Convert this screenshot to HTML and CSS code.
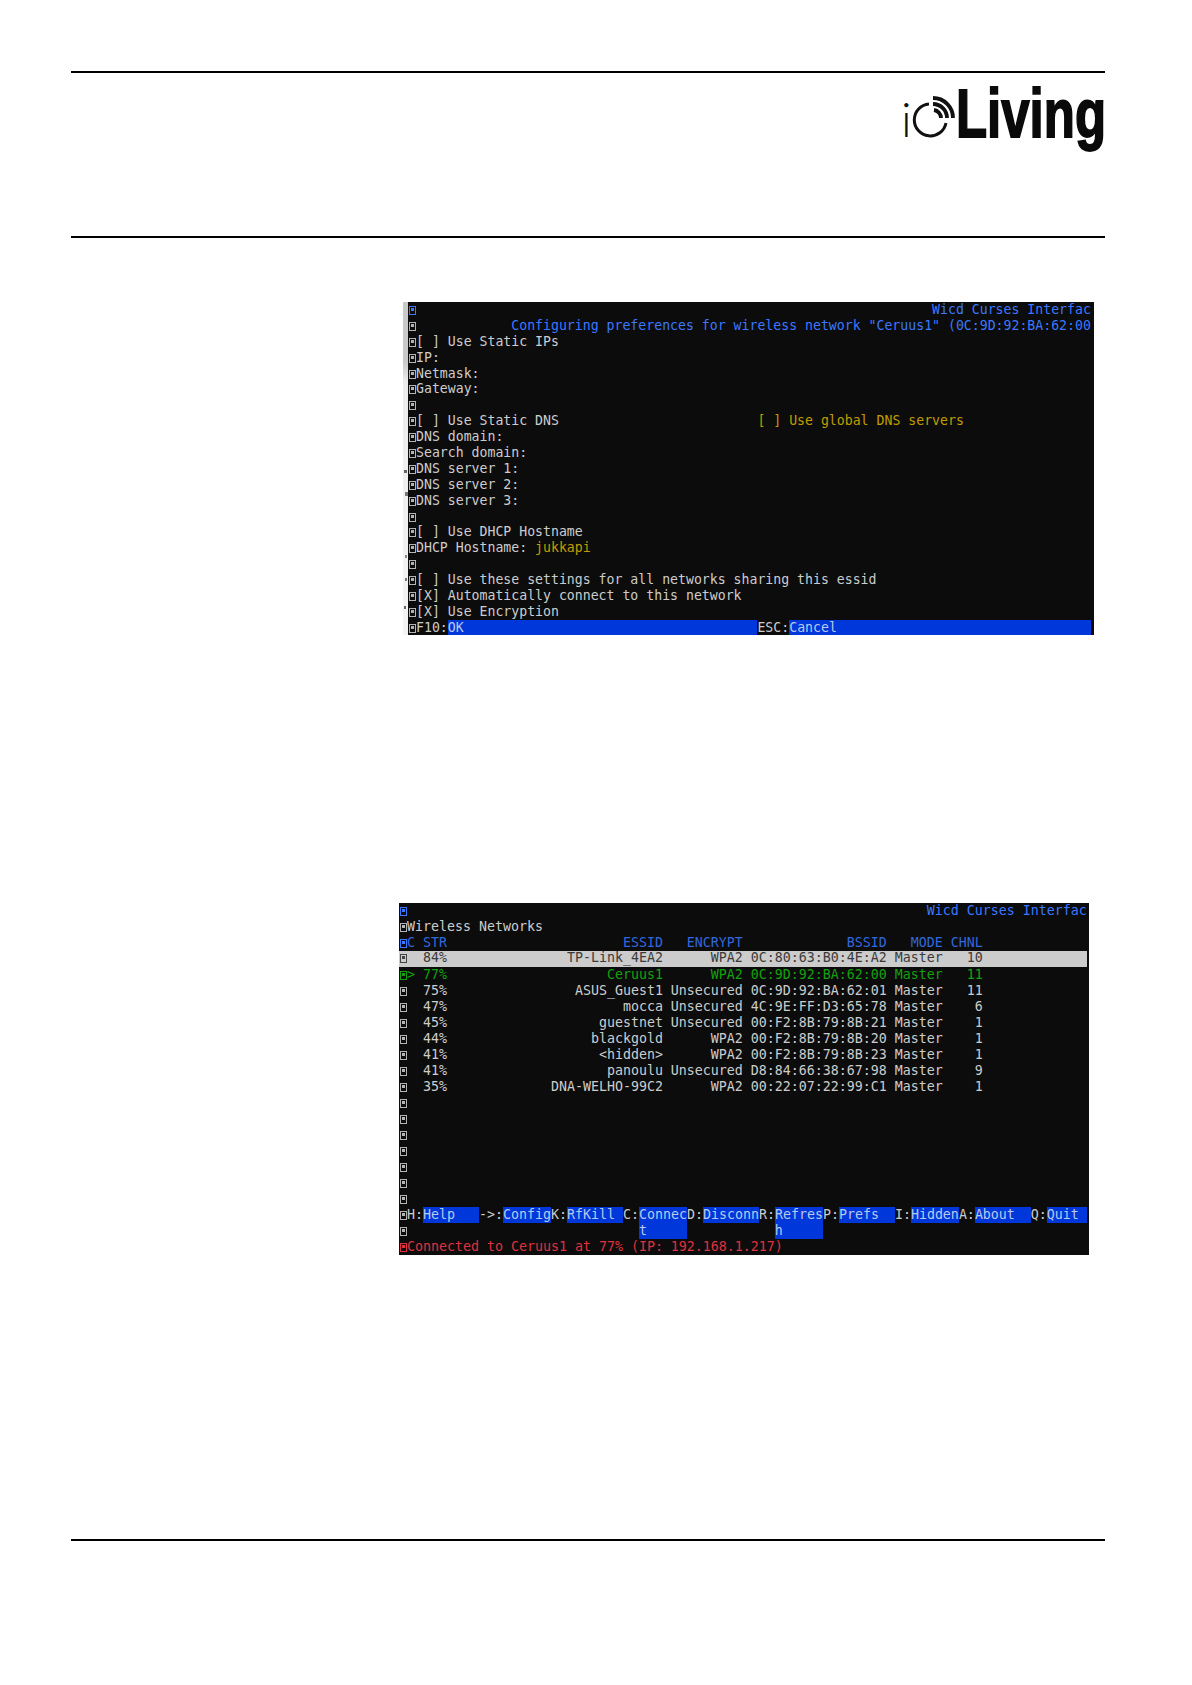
FILE: index.html
```html
<!DOCTYPE html>
<html lang="en">
<head>
<meta charset="utf-8">
<title>ioLiving - Wicd Curses Interface</title>
<link rel="stylesheet" href="styles.css">
</head>
<body>
<div class="page">
  <header class="head">
    <svg class="logo" viewBox="0 0 204 68" width="204" height="68" aria-label="ioLiving">
      <text class="logo-i" x="0" y="49">i</text>
      <path class="logo-ring" d="M28 16 A16 16 0 1 0 45 35"/>
      <path class="logo-wave" d="M32 10 A20 20 0 0 1 52 30"/>
      <path class="logo-wave" d="M32 16 A14 14 0 0 1 46 30"/>
      <path class="logo-wave" d="M33 22 A8 8 0 0 1 40 30"/>
      <text class="logo-word" x="55" y="48.5" textLength="150" lengthAdjust="spacingAndGlyphs">Living</text>
    </svg>
  </header>

  <main class="content">
    <section class="shot-a">
      <div class="strip"></div>
      <div class="term term-a">
        <div class="row"><i class="g gb"></i><span class="bl">                                                                 Wicd Curses Interfac</span></div>
        <div class="row"><i class="g"></i><span class="bl">            Configuring preferences for wireless network "Ceruus1" (0C:9D:92:BA:62:00</span></div>
        <div class="row"><i class="g"></i>[ ] Use Static IPs</div>
        <div class="row"><i class="g"></i>IP:</div>
        <div class="row"><i class="g"></i>Netmask:</div>
        <div class="row"><i class="g"></i>Gateway:</div>
        <div class="row"><i class="g"></i></div>
        <div class="row"><i class="g"></i>[ ] Use Static DNS                         <span class="ye">[ ] Use global DNS servers</span></div>
        <div class="row"><i class="g"></i>DNS domain:</div>
        <div class="row"><i class="g"></i>Search domain:</div>
        <div class="row"><i class="g"></i>DNS server 1:</div>
        <div class="row"><i class="g"></i>DNS server 2:</div>
        <div class="row"><i class="g"></i>DNS server 3:</div>
        <div class="row"><i class="g"></i></div>
        <div class="row"><i class="g"></i>[ ] Use DHCP Hostname</div>
        <div class="row"><i class="g"></i>DHCP Hostname: <span class="ye">jukkapi</span></div>
        <div class="row"><i class="g"></i></div>
        <div class="row"><i class="g"></i>[ ] Use these settings for all networks sharing this essid</div>
        <div class="row"><i class="g"></i>[X] Automatically connect to this network</div>
        <div class="row"><i class="g"></i>[X] Use Encryption</div>
        <div class="row"><i class="g"></i>F10:<span class="key">OK                                     </span>ESC:<span class="key">Cancel                                </span></div>
      </div>
    </section>

    <section class="term term-b">
      <div class="row"><i class="g gb"></i><span class="bl">                                                                 Wicd Curses Interfac</span></div>
      <div class="row"><i class="g"></i>Wireless Networks</div>
      <div class="row"><i class="g gb"></i><span class="hd">C STR                      ESSID   ENCRYPT             BSSID   MODE CHNL</span></div>
      <div class="row sel"><i class="g"></i>  84%               TP-Link_4EA2      WPA2 0C:80:63:B0:4E:A2 Master   10</div>
      <div class="row gr"><i class="g"></i>&gt; 77%                    Ceruus1      WPA2 0C:9D:92:BA:62:00 Master   11</div>
      <div class="row"><i class="g"></i>  75%                ASUS_Guest1 Unsecured 0C:9D:92:BA:62:01 Master   11</div>
      <div class="row"><i class="g"></i>  47%                      mocca Unsecured 4C:9E:FF:D3:65:78 Master    6</div>
      <div class="row"><i class="g"></i>  45%                   guestnet Unsecured 00:F2:8B:79:8B:21 Master    1</div>
      <div class="row"><i class="g"></i>  44%                  blackgold      WPA2 00:F2:8B:79:8B:20 Master    1</div>
      <div class="row"><i class="g"></i>  41%                   &lt;hidden&gt;      WPA2 00:F2:8B:79:8B:23 Master    1</div>
      <div class="row"><i class="g"></i>  41%                    panoulu Unsecured D8:84:66:38:67:98 Master    9</div>
      <div class="row"><i class="g"></i>  35%             DNA-WELHO-99C2      WPA2 00:22:07:22:99:C1 Master    1</div>
      <div class="row"><i class="g"></i></div>
      <div class="row"><i class="g"></i></div>
      <div class="row"><i class="g"></i></div>
      <div class="row"><i class="g"></i></div>
      <div class="row"><i class="g"></i></div>
      <div class="row"><i class="g"></i></div>
      <div class="row"><i class="g"></i></div>
      <div class="row"><i class="g"></i>H:<span class="key">Help   </span>-&gt;:<span class="key">Config</span>K:<span class="key">RfKill </span>C:<span class="key">Connec</span>D:<span class="key">Disconn</span>R:<span class="key">Refres</span>P:<span class="key">Prefs  </span>I:<span class="key">Hidden</span>A:<span class="key">About  </span>Q:<span class="key">Quit </span></div>
      <div class="row"><i class="g"></i>                             <span class="key">t     </span>           <span class="key">h     </span></div>
      <div class="row re"><i class="g"></i>Connected to Ceruus1 at 77% (IP: 192.168.1.217)</div>
    </section>
  </main>

  <footer class="foot"></footer>
</div>
</body>
</html>
```
FILE: styles.css
```css
* { box-sizing: border-box; }
html, body { margin: 0; background: #fff; }
.page { width: 1192px; height: 1685px; padding: 71px 87px 0 71px; overflow: hidden; }
.head {
  height: 167px;
  border-top: 2px solid #000;
  border-bottom: 2px solid #000;
  display: flex;
  justify-content: flex-end;
  align-items: flex-start;
  padding-top: 15px;
}
.logo { display: block; overflow: visible; }
.logo-i { font: 300 48px "Lato", sans-serif; fill: #111; }
.logo-word { font: 700 68px "Liberation Sans", sans-serif; fill: #0a0a0a; stroke: #0a0a0a; stroke-width: 1.8px; }
.logo-ring { fill: none; stroke: #111; stroke-width: 3; }
.logo-wave { fill: none; stroke: #111; stroke-width: 3.8; }
.content { display: flex; flex-direction: column; }
.shot-a {
  display: flex;
  margin: 64px 0 0 332px;
  width: 691px;
  height: 333px;
}
.strip {
  width: 5px;
  background:
    linear-gradient(#666, #666) 1px 168px / 3px 3px no-repeat,
    linear-gradient(#777, #777) 2px 190px / 3px 4px no-repeat,
    linear-gradient(#888, #888) 2px 253px / 2px 3px no-repeat,
    linear-gradient(#777, #777) 2px 276px / 2px 3px no-repeat,
    linear-gradient(#666, #666) 1px 304px / 2px 3px no-repeat,
    linear-gradient(#c9c9c9 0, #c9c9c9 18%, #ececec 24%, #f4f4f4 100%);
}
.term {
  background: #0c0c0c;
  color: #cccccc;
  font-family: "DejaVu Sans Mono", monospace;
  overflow: hidden;
}
.term-a { flex: 1; font-size: 13.2px; }
.term-a .row { height: 15.9px; line-height: 15.9px; }
.term-b {
  margin: 268px 0 0 328px;
  width: 690px;
  height: 352px;
  font-size: 13.29px;
}
.term-b .row { height: 16px; line-height: 16px; }
.row { white-space: pre; }
.g {
  display: inline-block;
  width: 7px;
  height: 9px;
  margin-left: 1px;
  vertical-align: -1px;
  border: 1px solid #b4b4b4;
  position: relative;
}
.g::after {
  content: "";
  position: absolute;
  left: 1px;
  top: 1px;
  width: 3px;
  height: 3px;
  background: #b4b4b4;
}
.gb { border-color: #3b78ff; }
.gb::after { background: #3b78ff; }
.bl { color: #3b78ff; }
.hd { color: #3268dc; }
.ye { color: #c19c00; }
.key { display: inline-block; background: #0037da; color: #b9c9ee; }
.term-b .sel { background: #cccccc; color: #3a3a3a; width: 688px; line-height: 14px; }
.sel .g { border-color: #444; }
.sel .g::after { background: #444; }
.gr { color: #13a10e; }
.gr .g { border-color: #13a10e; }
.gr .g::after { background: #13a10e; }
.re { color: #e0303f; }
.re .g { border-color: #e0303f; }
.re .g::after { background: #e0303f; }
.foot { margin-top: 284px; border-top: 2px solid #000; }
```
